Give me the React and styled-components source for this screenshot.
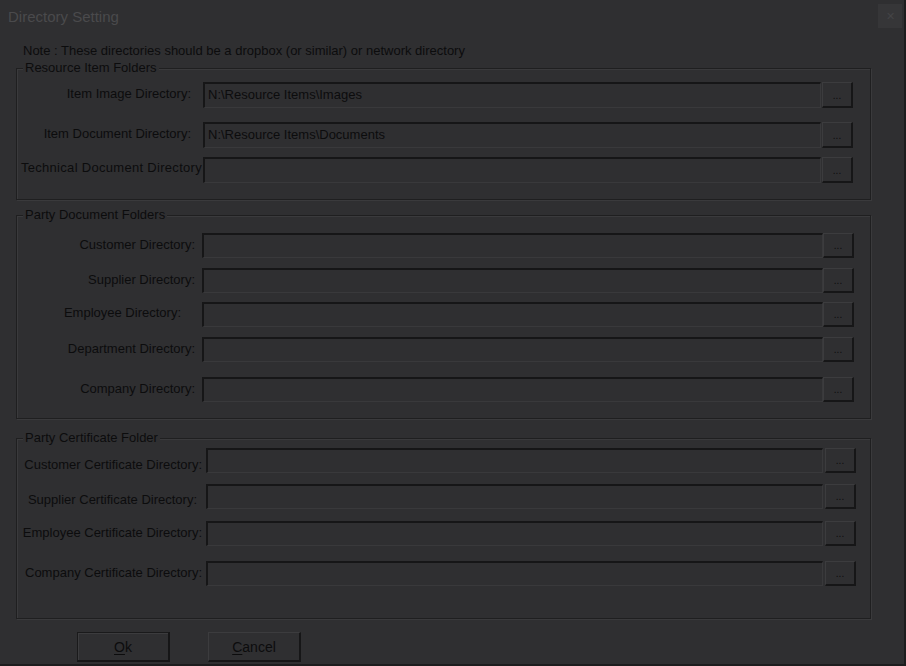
import React from 'react';
import styled, { createGlobalStyle } from 'styled-components';

const GlobalStyle = createGlobalStyle`
  html, body {
    margin: 0;
    padding: 0;
    background: #2f2f31;
  }
  * { box-sizing: border-box; }
`;

const resourceRows = [
  { label: 'Item Image Directory:', value: 'N:\\Resource Items\\Images', pad: 11, mt: 7, dy: -2 },
  { label: 'Item Document Directory:', value: 'N:\\Resource Items\\Documents', pad: 11, mt: 15, dy: -2 },
  { label: 'Technical Document Directory', value: '', pad: 0, mt: 10, dy: -3, wide: true },
];

const partyRows = [
  { label: 'Customer Directory:', pad: 7, mt: 11, dy: -1 },
  { label: 'Supplier Directory:', pad: 7, mt: 11, dy: -1 },
  { label: 'Employee Directory:', pad: 21, mt: 10, dy: -2 },
  { label: 'Department Directory:', pad: 7, mt: 11, dy: -1 },
  { label: 'Company Directory:', pad: 7, mt: 16, dy: -1 },
];

const certRows = [
  { label: 'Customer Certificate Directory:', pad: 2, mt: 3, dy: 4 },
  { label: 'Supplier Certificate Directory:', pad: 7, mt: 12, dy: 3 },
  { label: 'Employee Certificate Directory:', pad: 2, mt: 13, dy: -1 },
  { label: 'Company Certificate Directory:', pad: 2, mt: 16, dy: -1 },
];

const App = () => {
  return (
    <>
      <GlobalStyle />
      <Dialog>
        <TitleBar>
          <Title>Directory Setting</Title>
          <CloseBox>✕</CloseBox>
        </TitleBar>
        <Body>
          <Note>Note : These directories should be a dropbox (or similar) or network directory</Note>

          <Group $mt={3} $padR={17} $padB={17}>
            <Legend>Resource Item Folders</Legend>
            {resourceRows.map((r) => (
              <Row key={r.label} $labelW={185} $gap={1} $mt={r.mt} $h={25}>
                <Label $pad={r.pad} $dy={r.dy} $wide={r.wide}>{r.label}</Label>
                <Edit>{r.value}</Edit>
                <Browse $h={26}>...</Browse>
              </Row>
            ))}
          </Group>

          <Group $mt={8} $padR={16} $padB={17}>
            <Legend>Party Document Folders</Legend>
            {partyRows.map((r) => (
              <Row key={r.label} $labelW={185} $gap={0} $mt={r.mt} $h={24}>
                <Label $pad={r.pad} $dy={r.dy}>{r.label}</Label>
                <Edit />
                <Browse $h={25}>...</Browse>
              </Row>
            ))}
          </Group>

          <Group $mt={12} $padR={14} $padB={33}>
            <Legend>Party Certificate Folder</Legend>
            {certRows.map((r) => (
              <Row key={r.label} $labelW={187} $gap={2} $mt={r.mt} $h={24}>
                <Label $pad={r.pad} $dy={r.dy}>{r.label}</Label>
                <Edit />
                <Browse $h={25}>...</Browse>
              </Row>
            ))}
          </Group>

          <Footer>
            <PushButton $default>
              <u>O</u>k
            </PushButton>
            <PushButton>
              <u>C</u>ancel
            </PushButton>
          </Footer>
        </Body>
      </Dialog>
    </>
  );
};

const Dialog = styled.div`
  width: 906px;
  height: 666px;
  background: #2f2f31;
  display: flex;
  flex-direction: column;
  font-family: 'Liberation Sans', Arial, sans-serif;
  color: #0c0c0d;
  border-right: 2px solid #1d1d1e;
  border-bottom: 2px solid #1d1d1e;
  overflow: hidden;
`;

const TitleBar = styled.div`
  flex: 0 0 34px;
  display: flex;
  align-items: center;
  padding: 0 2px 0 8px;
`;

const Title = styled.div`
  font-size: 15px;
  color: #4a4a4c;
  margin-top: -1px;
`;

const CloseBox = styled.div`
  margin-left: auto;
  width: 24px;
  height: 24px;
  margin-top: -2px;
  background: #363638;
  color: #444446;
  font-size: 11px;
  display: flex;
  align-items: center;
  justify-content: center;
`;

const Body = styled.div`
  flex: 1 0 auto;
  display: flex;
  flex-direction: column;
  padding: 0 33px 0 16px;
  font-size: 13px;
`;

const Note = styled.div`
  margin: 10px 0 0 7px;
  line-height: 14px;
  white-space: nowrap;
`;

const Group = styled.fieldset`
  margin: ${(p) => p.$mt}px 0 0 0;
  padding: 0 ${(p) => p.$padR}px ${(p) => p.$padB}px 0;
  border: 1px solid #1f1f20;
  box-shadow: inset 1px 1px 0 #3a3a3c, 1px 1px 0 #3a3a3c;
  min-width: 0;
`;

const Legend = styled.legend`
  margin-left: 6px;
  padding: 0 2px;
  line-height: 14px;
  font-size: 13px;
  background: #2f2f31;
`;

const Row = styled.div`
  display: grid;
  grid-template-columns: ${(p) => p.$labelW}px 1fr 31px;
  column-gap: ${(p) => p.$gap}px;
  height: ${(p) => p.$h}px;
  margin-top: ${(p) => p.$mt}px;
`;

const Label = styled.div`
  align-self: center;
  text-align: right;
  white-space: nowrap;
  padding-right: ${(p) => p.$pad}px;
  position: relative;
  top: ${(p) => p.$dy}px;
  direction: rtl;
  unicode-bidi: plaintext;
  line-height: 15px;
  letter-spacing: ${(p) => (p.$wide ? '0.3px' : 'normal')};
`;

const Edit = styled.div`
  height: 100%;
  border-top: 2px solid #161617;
  border-left: 2px solid #161617;
  border-bottom: 1px solid #39393b;
  border-right: 1px solid #39393b;
  padding: 3px 0 0 3px;
  line-height: 16px;
  white-space: nowrap;
  overflow: hidden;
`;

const Browse = styled.div`
  align-self: start;
  height: ${(p) => p.$h}px;
  border-top: 1px solid #3c3c3e;
  border-left: 1px solid #3c3c3e;
  border-bottom: 2px solid #161617;
  border-right: 2px solid #161617;
  display: flex;
  align-items: flex-end;
  justify-content: center;
  padding-bottom: 5px;
  font-size: 10px;
  line-height: 10px;
`;

const Footer = styled.div`
  display: flex;
  gap: 38px;
  margin: 13px 0 0 61px;
`;

const PushButton = styled.div`
  width: 93px;
  height: 30px;
  display: flex;
  align-items: center;
  justify-content: center;
  font-size: 14px;
  border-top: 1px solid ${(p) => (p.$default ? '#1a1a1b' : '#3c3c3e')};
  border-left: 1px solid ${(p) => (p.$default ? '#1a1a1b' : '#3c3c3e')};
  border-bottom: 2px solid #161617;
  border-right: 2px solid #161617;
  box-shadow: ${(p) => (p.$default ? 'inset 1px 1px 0 #3c3c3e' : 'none')};

  u {
    text-decoration-thickness: 1px;
    text-underline-offset: 2px;
  }
`;

export default App;
